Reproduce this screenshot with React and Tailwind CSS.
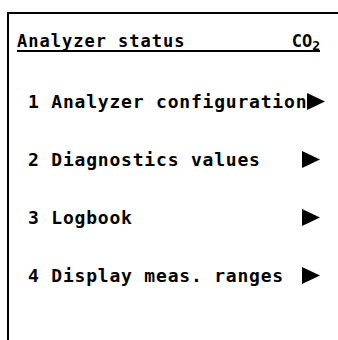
const items = [
  '1 Analyzer configuration',
  '2 Diagnostics values',
  '3 Logbook',
  '4 Display meas. ranges',
]

function Arrow() {
  return (
    <svg width="18" height="17" viewBox="0 0 18 17" className="shrink-0">
      <polygon points="0,0 18,8.5 0,17" fill="#000" />
    </svg>
  )
}

export default function App() {
  return (
    <div className="w-[338px] h-[340px] overflow-hidden bg-white text-black" style={{ fontFamily: '"DejaVu Sans Mono", "Liberation Mono", monospace' }}>
      <div className="ml-[7px] mt-[12px] w-[400px] h-[400px] border-l-2 border-t-2 border-black">
        <div className="ml-[8px] mt-[18px] w-[303px] flex justify-between items-end border-b-2 border-black text-[17px] font-bold leading-[18px] tracking-[1px]">
          <span>Analyzer status</span>
          <span className="tracking-normal">CO<sub className="text-[13px]">2</sub></span>
        </div>
        <div className="mt-[40px] ml-[19px] flex flex-col gap-[40px]">
          {items.map((t) => (
            <div key={t} className="flex items-center h-[18px]">
              <span className="min-w-[274px] text-[18px] font-bold tracking-[0.8px] whitespace-nowrap">{t}</span>
              <Arrow />
            </div>
          ))}
        </div>
      </div>
    </div>
  )
}
